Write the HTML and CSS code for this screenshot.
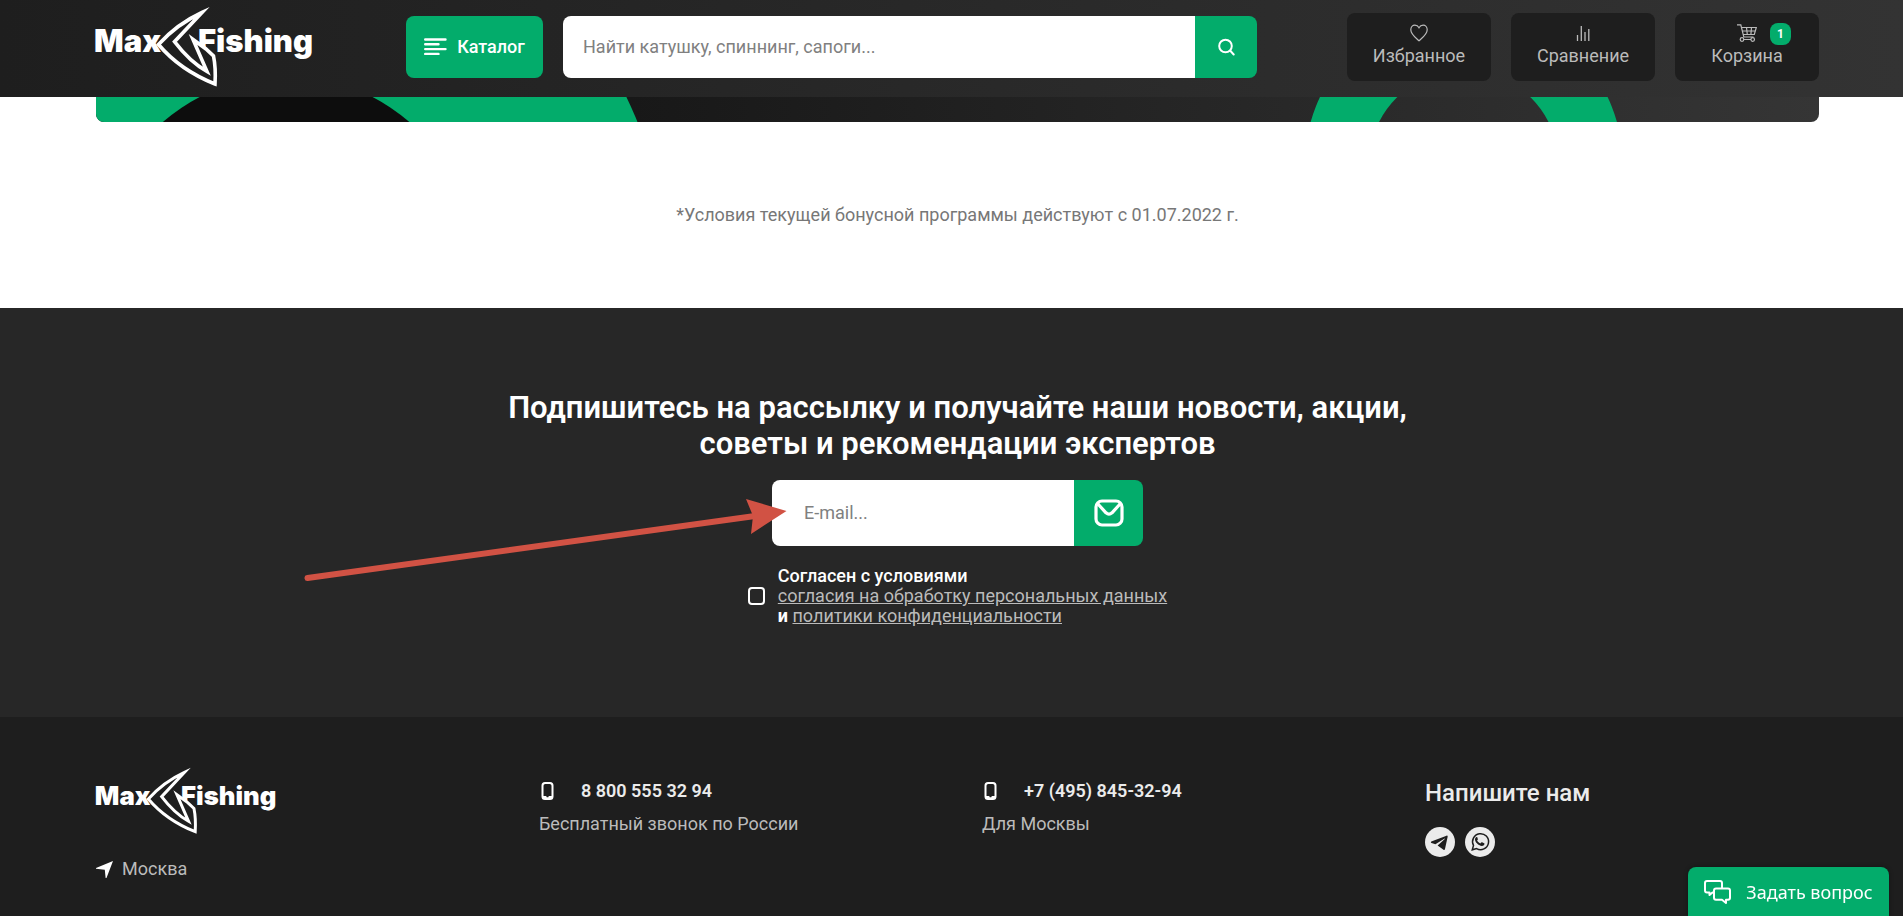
FILE: index.html
```html
<!DOCTYPE html>
<html lang="ru">
<head>
<meta charset="utf-8">
<title>MaxFishing</title>
<link rel="stylesheet" href="styles.css">
</head>
<body>
<header class="header">
  <div class="container header-row">
    <a class="header-logo" href="#" aria-label="MaxFishing">
      <svg class="logo" viewBox="0 0 217 82">
        <text class="logo-text" x="-2" y="46">Max</text>
        <text class="logo-text" x="102" y="46">Fishing</text>
        <path class="logo-mark" d="M106 6.500Q81 18 62.500 38.500Q84 64 119 78Q120 62 117.500 50L110 43L97 33.500L111 65.500Q94 56 78.500 35.700Z"/>
      </svg>
    </a>
    <button class="catalog" type="button">
      <svg width="23" height="18" viewBox="0 0 23 18" fill="none" stroke="#fff" stroke-width="2.400" stroke-linecap="round"><path d="M1.200 1.500h20.300M1.200 6.300h13.300M1.200 11.100h20.300M1.200 15.900h13.300"/></svg>
      Каталог
    </button>
    <form class="search">
      <input type="text" aria-label="Поиск" placeholder="Найти катушку, спиннинг, сапоги...">
      <button type="button" aria-label="Найти">
        <svg width="18" height="18" viewBox="0 0 18 18" fill="none" stroke="#fff" stroke-width="2" stroke-linecap="round"><circle cx="8.500" cy="8" r="6.300"/><path d="m13.300 12.800 3.400 3.700"/></svg>
      </button>
    </form>
    <nav class="actions">
      <a class="action" href="#">
        <svg width="18" height="18" viewBox="0 0 18 18" fill="none" stroke="currentColor" stroke-width="1.200"><path d="M9 16.800C6 14 .8 10.500.8 5.800.8 3 2.700 1.200 4.900 1.200 7 1.200 8.300 2.500 9 3.800c.7-1.300 2-2.600 4.100-2.600 2.200 0 4.100 1.800 4.100 4.600 0 4.700-5.200 8.200-8.200 11Z"/></svg>
        Избранное
      </a>
      <a class="action" href="#">
        <svg width="18" height="18" viewBox="0 0 18 18" fill="none" stroke="currentColor" stroke-width="1.300"><path d="M3.500 11v6M7.300 2v15M11 8v9M14.800 5v12"/></svg>
        Сравнение
      </a>
      <a class="action" href="#">
        <svg width="20" height="18" viewBox="0 0 20 18" fill="none" stroke="currentColor" stroke-width="1.200"><path d="M0 .8h3.800l3 12.200h9.700M4.500 3.500H19.300L17.300 10.500H6.200M5.400 7h12.900M9.500 3.500l.8 7M14.500 3.500l-.6 7M6.500 15.500h7.500"/><circle cx="5" cy="15.500" r="1.800"/><circle cx="15.700" cy="15.500" r="1.800"/></svg>
        Корзина
        <span class="badge">1</span>
      </a>
    </nav>
  </div>
</header>

<main>
  <section class="container bonus">
    <div class="banner">
      <svg class="banner-art" viewBox="0 0 1722 25" preserveAspectRatio="xMidYMax slice">
        <circle cx="190" cy="165" r="378" fill="#03ac6b"/>
        <circle cx="190" cy="167" r="188" fill="#0d0d0d"/>
        <circle cx="1367" cy="68" r="127" fill="none" stroke="#03ac6b" stroke-width="64"/>
      </svg>
    </div>
    <p class="note">*Условия текущей бонусной программы действуют с 01.07.2022 г.</p>
  </section>

  <section class="subscribe">
    <div class="container subscribe-inner">
      <h2>Подпишитесь на рассылку и получайте наши новости, акции,<br>советы и рекомендации экспертов</h2>
      <form class="mail">
        <input type="email" aria-label="E-mail" placeholder="E-mail...">
        <button type="button" aria-label="Подписаться">
          <svg width="30" height="28" viewBox="0 0 30 28" fill="none" stroke="#fff" stroke-width="3.200" stroke-linejoin="round"><rect x="2" y="2" width="26" height="24" rx="6"/><path d="m3.500 4.500 8.500 9.300q3 2.600 6 0l8.500-9.300"/></svg>
        </button>
        <svg class="arrow" width="484" height="86" viewBox="0 0 484 86"><path d="M3.500 82 451 20" stroke="#d15244" stroke-width="6" stroke-linecap="round"/><path d="M442 3 482.500 15 447 38 449 20Z" fill="#d15244"/></svg>
      </form>
      <div class="agree">
        <input type="checkbox" id="agree">
        <div><label for="agree">Согласен с условиями</label><br><a href="#">согласия на обработку персональных данных</a><br><b>и</b> <a href="#">политики конфиденциальности</a></div>
      </div>
    </div>
  </section>
</main>

<footer class="footer">
  <div class="container footer-row">
    <div class="brand">
      <svg class="logo logo-small" viewBox="0 0 217 82">
        <text class="logo-text" x="-2" y="46">Max</text>
        <text class="logo-text" x="102" y="46">Fishing</text>
        <path class="logo-mark" d="M106 6.500Q81 18 62.500 38.500Q84 64 119 78Q120 62 117.500 50L110 43L97 33.500L111 65.500Q94 56 78.500 35.700Z"/>
      </svg>
      <a class="city" href="#"><svg width="17" height="17" viewBox="0 0 18 18"><path fill="#fff" d="M18 0 0 7.300v.8l9.300 1.100.9 8.800h.9Z"/></svg>Москва</a>
    </div>
    <div class="contact">
      <a class="tel" href="#"><svg width="16" height="18" viewBox="0 0 16 18"><path fill="#fff" fill-rule="evenodd" d="M6 0h5a3.500 3.500 0 0 1 3.500 3.500v11A3.500 3.500 0 0 1 11 18H6a3.500 3.500 0 0 1-3.500-3.500v-11A3.500 3.500 0 0 1 6 0Zm.3 2A1.800 1.800 0 0 0 4.500 3.800V14h2.700l.5 1.300h1.600l.5-1.300h2.700V3.800A1.800 1.800 0 0 0 10.700 2Z"/></svg>8 800 555 32 94</a>
      <span>Бесплатный звонок по России</span>
    </div>
    <div class="contact">
      <a class="tel" href="#"><svg width="16" height="18" viewBox="0 0 16 18"><path fill="#fff" fill-rule="evenodd" d="M6 0h5a3.500 3.500 0 0 1 3.500 3.500v11A3.500 3.500 0 0 1 11 18H6a3.500 3.500 0 0 1-3.500-3.500v-11A3.500 3.500 0 0 1 6 0Zm.3 2A1.800 1.800 0 0 0 4.500 3.800V14h2.700l.5 1.300h1.600l.5-1.300h2.700V3.800A1.800 1.800 0 0 0 10.700 2Z"/></svg>+7 (495) 845-32-94</a>
      <span>Для Москвы</span>
    </div>
    <div class="write">
      <h3>Напишите нам</h3>
      <div class="social">
        <a href="#" aria-label="Telegram"><svg width="30" height="30" viewBox="0 0 30 30"><circle cx="15" cy="15" r="15" fill="#ebebeb"/><path fill="#1e1e1e" d="M6.300 14.600 21.500 8.700c.7-.3 1.400.2 1.100 1.400L20 22c-.2 1-.8 1.200-1.500.8l-5.900-4.400 7.200-6.500c.3-.3-.1-.4-.5-.2l-8.900 5.600-3.900-1.200c-.8-.3-.8-.9-.2-1.500Z"/></svg></a>
        <a href="#" aria-label="WhatsApp"><svg width="30" height="30" viewBox="0 0 30 30"><circle cx="15" cy="15" r="15" fill="#ebebeb"/><path d="M7.300 22.800 8.500 18.400A8 8 0 1 1 11.600 21.600Z" fill="none" stroke="#1e1e1e" stroke-width="1.500"/><path fill="#1e1e1e" d="M12.300 10.300c-.3-.6-1.200-.5-1.600.1-2 2.500.8 6 3.400 7.600 2.200 1.300 4.600 1.300 5.300-.7.200-.6.100-.8-.3-1l-2-1c-.4-.2-.7 0-1.700 1.100-1.800-.8-2.800-1.900-3.300-3 .8-.9.900-1.100.7-1.500Z"/></svg></a>
      </div>
    </div>
  </div>
</footer>

<button class="chat" type="button">
  <svg width="27" height="24" viewBox="0 0 27 24" fill="none" stroke="#fff" stroke-width="2" stroke-linejoin="round"><path d="M10 12.500H8.500L5.500 15v-2.500H3a2 2 0 0 1-2-2V3a2 2 0 0 1 2-2h13a2 2 0 0 1 2 2v5.500"/><path d="M12 8.500h12a2 2 0 0 1 2 2v7.300a2 2 0 0 1-2 2h-2V23l-4-3.200h-6a2 2 0 0 1-2-2v-7.300a2 2 0 0 1 2-2Z"/></svg>
  Задать вопрос
</button>
</body>
</html>
```
FILE: styles.css
```css
* { box-sizing: border-box; }
body {
  margin: 0;
  min-height: 100vh;
  display: flex;
  flex-direction: column;
  font: 18px/20px Roboto, "Liberation Sans", sans-serif;
  color: #fff;
  background: #fff;
}
a { color: inherit; text-decoration: none; }
button, input { font: inherit; border: 0; }
button { cursor: pointer; color: #fff; background: #03ac6b; }
svg { display: block; flex: none; }
.container { padding: 0 84px 0 96px; }

.logo { width: 217px; height: 82px; overflow: visible; }
.logo-text { font: 900 31px Inter, sans-serif; fill: #fff; }
.logo-mark { fill: #1f1f1f; stroke: #fff; stroke-width: 3.600; stroke-miterlimit: 10; }
.logo-small { width: 181px; height: 68px; }

.header { background: linear-gradient(90deg, #1e1e1e, #333); }
.header-row { display: flex; align-items: center; height: 97px; }
.header-logo { flex: none; margin: 0 93px 3px 0; }
.catalog {
  display: flex;
  align-items: center;
  justify-content: center;
  gap: 10px;
  flex: none;
  width: 137px;
  height: 62px;
  margin: 0 20px 4px 0;
  padding: 0;
  border-radius: 8px;
  font-weight: 500;
}
.search { display: flex; flex: 1; height: 62px; margin: 0 90px 4px 0; border-radius: 8px; overflow: hidden; }
.search input { flex: 1; min-width: 0; padding: 0 20px; }
.search button { display: grid; place-items: center; width: 62px; padding: 0; }
input::placeholder { color: #808080; opacity: 1; }
.actions { display: flex; gap: 20px; margin-bottom: 3px; }
.action {
  position: relative;
  display: flex;
  flex-direction: column;
  align-items: center;
  gap: 4px;
  width: 144px;
  height: 68px;
  padding-top: 11px;
  border-radius: 8px;
  background: #1e1e1e;
  color: #bbb;
}
.badge {
  position: absolute;
  top: 10px;
  right: 28px;
  width: 21px;
  border-radius: 8px;
  background: #03ac6b;
  color: #fff;
  font-size: 12px;
  font-weight: 700;
  line-height: 22px;
  text-align: center;
}

.banner { height: 25px; border-radius: 0 0 8px 8px; overflow: hidden; background: linear-gradient(90deg, #0b0b0b, #353535); }
.banner-art { width: 100%; height: 100%; }
.note { margin: 0; padding: 83px 0; color: #777; text-align: center; }

.subscribe { background: #272727; }
.subscribe-inner { display: flex; flex-direction: column; align-items: center; padding-top: 82px; padding-bottom: 91px; }
.subscribe h2 { margin: 0 0 18px; font: 600 31px/36px Roboto, sans-serif; text-align: center; }
.mail { position: relative; display: flex; width: 371px; height: 66px; }
.mail input { flex: 1; min-width: 0; padding: 0 32px; border-radius: 8px 0 0 8px; }
.mail button { display: grid; place-items: center; width: 69px; padding: 0; border-radius: 0 8px 8px 0; }
.arrow { position: absolute; top: 16px; left: -468px; pointer-events: none; }
.agree { display: flex; align-items: center; gap: 13px; margin-top: 20px; font-weight: 500; }
.agree a { color: #bbb; font-weight: 400; text-decoration: underline; }
.agree input { appearance: none; width: 17px; height: 18px; margin: 0; border: 2px solid #fff; border-radius: 4px; }

.footer { flex: 1; background: #1e1e1e; }
.footer-row { display: grid; grid-template-columns: 443px 443px 443px 1fr; padding-top: 50px; color: #bbb; }
.city { display: inline-flex; align-items: center; gap: 9px; margin-top: 24px; }
.contact { padding-top: 14px; }
.tel { display: flex; align-items: center; gap: 26px; margin-bottom: 13px; color: #ebebeb; font-weight: 600; }
.write { padding-top: 12px; }
.write h3 { margin: 0 0 20px; color: #ebebeb; font: 500 24px/28px Roboto, sans-serif; }
.social { display: flex; gap: 10px; }

.chat {
  position: fixed;
  right: 14px;
  bottom: 0;
  display: flex;
  align-items: center;
  justify-content: center;
  gap: 15px;
  width: 201px;
  height: 49px;
  padding: 0;
  border-radius: 8px 8px 0 0;
  box-shadow: 0 0 4px #0006;
  font-family: "Noto Sans", sans-serif;
}
```
